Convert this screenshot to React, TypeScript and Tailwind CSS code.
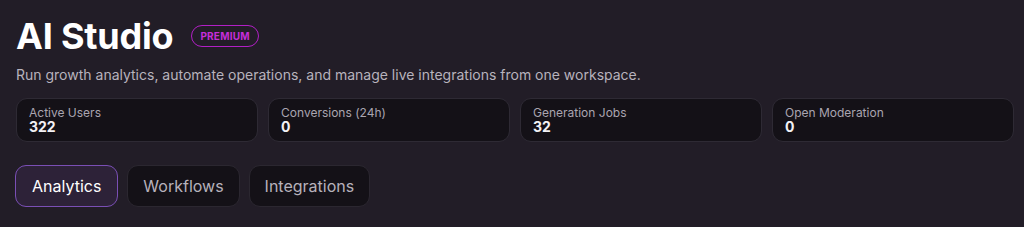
import React, { useState } from 'react';

const stats = [
  { label: 'Active Users', value: '322' },
  { label: 'Conversions (24h)', value: '0' },
  { label: 'Generation Jobs', value: '32' },
  { label: 'Open Moderation', value: '0' },
];

const tabs = ['Analytics', 'Workflows', 'Integrations'];

const App: React.FC = () => {
  const [active, setActive] = useState('Analytics');

  return (
    <div className="min-h-screen bg-[#221d27] font-['Inter',sans-serif] text-white pl-4 pr-[10px] pt-[14px]">
      {/* Header */}
      <div className="flex items-center gap-[18px]">
        <h1 className="text-[36px] font-bold leading-[44px] tracking-[-0.2px]">AI Studio</h1>
        <span className="rounded-full border-[1.5px] border-[#b21fc6] px-2 py-[5px] text-[10px] font-bold leading-none text-[#c52ed8] tracking-[0.2px]">
          PREMIUM
        </span>
      </div>
      <p className="mt-[7px] text-[14px] leading-5 text-[#b8b3bd]">
        Run growth analytics, automate operations, and manage live integrations from one workspace.
      </p>

      {/* Stats */}
      <div className="mt-[13px] grid grid-cols-4 gap-[10px]">
        {stats.map((s) => (
          <div key={s.label} className="rounded-[11px] border border-[#2e2a34] bg-[#141117] px-3 pt-[7px] pb-[7px]">
            <div className="text-[12px] leading-[13px] text-[#aaa5b0]">{s.label}</div>
            <div className="text-[14px] font-bold leading-[15px] text-[#f3f1f5]">{s.value}</div>
          </div>
        ))}
      </div>

      {/* Tabs */}
      <div className="mt-[23px] -ml-px flex gap-[9px]">
        {tabs.map((t) =>
          t === active ? (
            <button
              key={t}
              onClick={() => setActive(t)}
              className="rounded-[11px] border border-[#7a4fb5] bg-[#2d2238] px-4 py-[10px] text-[16px] leading-5 text-white"
            >
              {t}
            </button>
          ) : (
            <button
              key={t}
              onClick={() => setActive(t)}
              className="rounded-[11px] border border-[#2b2730] bg-[#141117] px-[15px] py-[10px] text-[16px] leading-5 text-[#b7b2bc]"
            >
              {t}
            </button>
          ),
        )}
      </div>
    </div>
  );
};

export default App;
